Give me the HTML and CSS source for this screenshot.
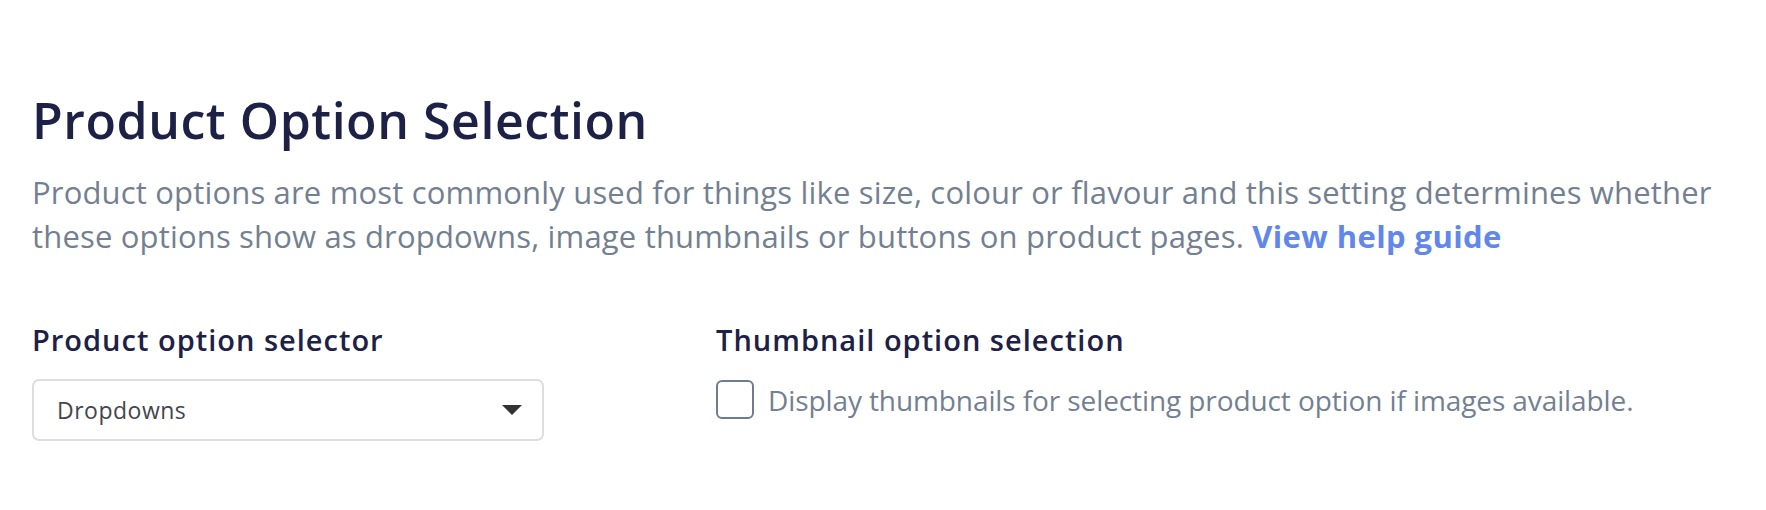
FILE: index.html
```html
<!DOCTYPE HTML>
<html>
    <head>
        <meta http-equiv="Content-Type" content="text/html; charset=UTF-8">
        <title>Product Option Selection</title>
        <link rel="stylesheet" href="styles.css">
    </head>
    <body>
        <div class="section">
            <h1 class="title">Product Option Selection</h1>
            <p class="intro">Product options are most commonly used for things like size, colour or flavour and this setting determines whether these options show as dropdowns, image thumbnails or buttons on product pages. <a class="help" href="#">View help guide</a></p>

            <div class="fields">
                <div class="field">
                    <label class="label" for="selector">Product option selector</label>
                    <div class="select">
                        <span class="select-value">Dropdowns</span>
                        <span class="caret"></span>
                    </div>
                </div>
                <div class="field">
                    <div class="label">Thumbnail option selection</div>
                    <label class="check">
                        <span class="box"></span>
                        <span class="check-text">Display thumbnails for selecting product option if images available.</span>
                    </label>
                </div>
            </div>
        </div>
    </body>
</html>
```

FILE: styles.css
```css
body {
    margin: 0;
    background: #fff;
    font-family: "Open Sans", Lato, sans-serif;
}

.section {
    padding: 90px 32px 0 32px;
}

.title {
    margin: 0;
    font-size: 50px;
    line-height: 60px;
    font-weight: 600;
    letter-spacing: 0.55px;
    color: #1d2146;
}

.intro {
    margin: 20px 0 0 0;
    font-size: 31px;
    line-height: 44px;
    letter-spacing: 0.17px;
    color: #737f92;
}

.help {
    color: #6187ea;
    font-weight: 700;
    letter-spacing: 0.4px;
    text-decoration: none;
}

.fields {
    display: grid;
    grid-template-columns: 512px auto;
    column-gap: 172px;
    margin-top: 64px;
}

.label {
    display: block;
    font-size: 29px;
    line-height: 36px;
    font-weight: 600;
    letter-spacing: 1px;
    color: #1d2146;
}

.select {
    display: flex;
    align-items: center;
    justify-content: space-between;
    height: 58px;
    margin-top: 21px;
    padding: 0 20px 0 23px;
    border: 2px solid #dedede;
    border-radius: 7px;
}

.select-value {
    font-size: 23px;
    letter-spacing: 0.5px;
    color: #44464f;
}

.caret {
    width: 0;
    height: 0;
    border-left: 10px solid transparent;
    border-right: 10px solid transparent;
    border-top: 10px solid #333;
}

.check {
    display: flex;
    align-items: center;
    gap: 14px;
    margin-top: 22px;
}

.box {
    width: 34px;
    height: 35px;
    border: 2px solid #6f7b8e;
    border-radius: 6px;
}

.check-text {
    font-size: 28px;
    letter-spacing: -0.1px;
    color: #737f92;
}
```
